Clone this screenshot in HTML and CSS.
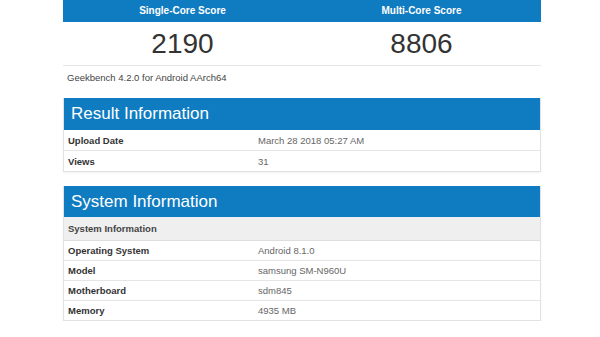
FILE: index.html
```html
<!DOCTYPE html>
<html lang="en">

<head>
  <meta charset="UTF-8">
  <meta name="viewport" content="width=device-width, initial-scale=1.0">
  <title>Geekbench Result</title>
  <link rel="stylesheet" href="styles.css">
</head>

<body>
  <div class="page">

    <div class="scores">
      <div class="score-col">
        <div class="score-head">Single-Core Score</div>
        <div class="score-value">2190</div>
      </div>
      <div class="score-col">
        <div class="score-head">Multi-Core Score</div>
        <div class="score-value">8806</div>
      </div>
    </div>
    <div class="version">Geekbench 4.2.0 for Android AArch64</div>

    <div class="panel result">
      <div class="panel-head">Result Information</div>
      <table class="info">
        <tr><th>Upload Date</th><td>March 28 2018 05:27 AM</td></tr>
        <tr><th>Views</th><td>31</td></tr>
      </table>
    </div>

    <div class="panel system">
      <div class="panel-head">System Information</div>
      <table class="info">
        <tr class="sub"><th colspan="2">System Information</th></tr>
        <tr><th>Operating System</th><td>Android 8.1.0</td></tr>
        <tr><th>Model</th><td>samsung SM-N960U</td></tr>
        <tr><th>Motherboard</th><td>sdm845</td></tr>
        <tr><th>Memory</th><td>4935 MB</td></tr>
      </table>
    </div>

  </div>
</body>

</html>
```

FILE: styles.css
```css
body {
  margin: 0;
  background: #fff;
  font-family: "Liberation Sans", Arial, sans-serif;
  color: #333;
}

.page {
  width: 478px;
  margin-left: 63px;
}

/* score block */
.scores {
  display: grid;
  grid-template-columns: 1fr 1fr;
  border-bottom: 1px solid #e6e6e6;
}

.score-head {
  background: #0f7cc1;
  color: #fff;
  font-size: 10px;
  font-weight: bold;
  text-align: center;
  height: 22px;
  line-height: 22px;
}

.score-value {
  height: 43px;
  line-height: 44px;
  text-align: center;
  font-size: 28px;
  color: #333;
}

.version {
  font-size: 9.5px;
  color: #444;
  padding: 6px 4px 0;
  height: 27px;
  box-sizing: border-box;
}

/* panels */
.panel {
  border: 1px solid #e2e2e2;
  border-top: none;
  box-shadow: 0 1px 2px rgba(0, 0, 0, 0.06);
}

.result {
  margin-top: 5px;
}

.system {
  margin-top: 14px;
}

.panel-head {
  background: #0f7cc1;
  color: #fff;
  font-size: 17px;
  height: 32px;
  line-height: 32px;
  padding-left: 7px;
}

.system .panel-head {
  height: 31px;
  line-height: 31px;
}

table.info {
  width: 100%;
  border-collapse: collapse;
  font-size: 9.5px;
}

table.info th,
table.info td {
  height: 19px;
  padding: 0 4px;
  text-align: left;
  border-top: 1px solid #e6e6e6;
}

table.info tr:first-child th,
table.info tr:first-child td {
  border-top: none;
}

.result table.info th,
.result table.info td {
  height: 20px;
}

table.info th {
  width: 182px;
  font-weight: bold;
  color: #333;
}

table.info td {
  color: #666;
}

table.info tr.sub th {
  background: #efefef;
  color: #444;
  height: 23px;
  border-bottom: 1px solid #ddd;
}
```
